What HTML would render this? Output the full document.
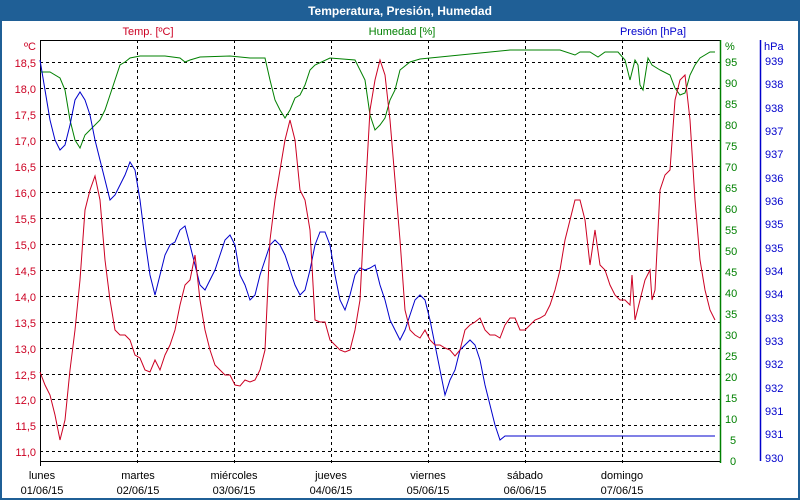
<!DOCTYPE html>
<html><head><meta charset="utf-8"><style>
html,body{margin:0;padding:0;background:#fff}
svg{display:block;font-family:"Liberation Sans",sans-serif;font-size:11px}
</style></head><body>
<svg width="800" height="500" viewBox="0 0 800 500">
<rect x="0" y="0" width="800" height="500" fill="#1f5f96"/>
<rect x="2" y="21" width="796" height="477" fill="#fff"/>
<text x="400" y="15" text-anchor="middle" fill="#fff" font-weight="bold" font-size="12">Temperatura, Presión, Humedad</text>
<text x="148" y="35" text-anchor="middle" fill="#cc0022">Temp. [ºC]</text>
<text x="402" y="35" text-anchor="middle" fill="#008000">Humedad [%]</text>
<text x="653" y="35" text-anchor="middle" fill="#0000cc">Presión [hPa]</text>
<g stroke="#000" stroke-dasharray="3,3" stroke-width="1">
<line x1="40" x2="720" y1="62.5" y2="62.5"/><line x1="40" x2="720" y1="88.5" y2="88.5"/><line x1="40" x2="720" y1="114.5" y2="114.5"/><line x1="40" x2="720" y1="140.5" y2="140.5"/><line x1="40" x2="720" y1="166.5" y2="166.5"/><line x1="40" x2="720" y1="192.5" y2="192.5"/><line x1="40" x2="720" y1="218.5" y2="218.5"/><line x1="40" x2="720" y1="244.5" y2="244.5"/><line x1="40" x2="720" y1="270.5" y2="270.5"/><line x1="40" x2="720" y1="296.5" y2="296.5"/><line x1="40" x2="720" y1="322.5" y2="322.5"/><line x1="40" x2="720" y1="348.5" y2="348.5"/><line x1="40" x2="720" y1="374.5" y2="374.5"/><line x1="40" x2="720" y1="399.5" y2="399.5"/><line x1="40" x2="720" y1="425.5" y2="425.5"/><line x1="40" x2="720" y1="451.5" y2="451.5"/>
<line x1="137.5" x2="137.5" y1="40" y2="466"/><line x1="234.5" x2="234.5" y1="40" y2="466"/><line x1="331.5" x2="331.5" y1="40" y2="466"/><line x1="428.5" x2="428.5" y1="40" y2="466"/><line x1="525.5" x2="525.5" y1="40" y2="466"/><line x1="622.5" x2="622.5" y1="40" y2="466"/>
</g>
<line x1="40.5" x2="40.5" y1="40" y2="466" stroke="#000"/>
<line x1="40" x2="720" y1="461.5" y2="461.5" stroke="#000"/>
<line x1="40" x2="720" y1="40.5" y2="40.5" stroke="#000"/>
<line x1="720.5" x2="720.5" y1="40" y2="463" stroke="#008000" stroke-width="1.5"/>
<line x1="760.5" x2="760.5" y1="40" y2="461" stroke="#0000cc" stroke-width="1.5"/>
<g fill="#cc0022" text-anchor="end">
<text x="36" y="50">ºC</text>
<text x="36" y="67">18,5</text><text x="36" y="93">18,0</text><text x="36" y="119">17,5</text><text x="36" y="145">17,0</text><text x="36" y="171">16,5</text><text x="36" y="197">16,0</text><text x="36" y="223">15,5</text><text x="36" y="249">15,0</text><text x="36" y="275">14,5</text><text x="36" y="301">14,0</text><text x="36" y="327">13,5</text><text x="36" y="353">13,0</text><text x="36" y="379">12,5</text><text x="36" y="404">12,0</text><text x="36" y="430">11,5</text><text x="36" y="456">11,0</text>
</g>
<g fill="#008000">
<text x="725" y="50">%</text>
<text x="725" y="66">95</text><text x="725" y="87">90</text><text x="725" y="108">85</text><text x="725" y="129">80</text><text x="725" y="150">75</text><text x="725" y="171">70</text><text x="725" y="192">65</text><text x="725" y="213">60</text><text x="725" y="234">55</text><text x="725" y="255">50</text><text x="725" y="276">45</text><text x="725" y="297">40</text><text x="725" y="318">35</text><text x="725" y="339">30</text><text x="725" y="360">25</text><text x="725" y="381">20</text><text x="725" y="402">15</text><text x="725" y="423">10</text><text x="730" y="444">5</text><text x="730" y="465">0</text>
</g>
<g fill="#0000cc">
<text x="764" y="50">hPa</text>
<text x="765" y="65">939</text><text x="765" y="88">938</text><text x="765" y="112">938</text><text x="765" y="135">937</text><text x="765" y="158">937</text><text x="765" y="182">936</text><text x="765" y="205">936</text><text x="765" y="228">935</text><text x="765" y="252">935</text><text x="765" y="275">934</text><text x="765" y="298">934</text><text x="765" y="322">933</text><text x="765" y="345">933</text><text x="765" y="368">932</text><text x="765" y="392">932</text><text x="765" y="415">931</text><text x="765" y="438">931</text><text x="765" y="462">930</text>
</g>
<g fill="#000" text-anchor="middle">
<text x="42" y="479">lunes</text><text x="42" y="494">01/06/15</text>
<text x="138" y="479">martes</text><text x="138" y="494">02/06/15</text>
<text x="234" y="479">miércoles</text><text x="234" y="494">03/06/15</text>
<text x="331" y="479">jueves</text><text x="331" y="494">04/06/15</text>
<text x="428" y="479">viernes</text><text x="428" y="494">05/06/15</text>
<text x="525" y="479">sábado</text><text x="525" y="494">06/06/15</text>
<text x="622" y="479">domingo</text><text x="622" y="494">07/06/15</text>
</g>
<polyline fill="none" stroke="#008000" points="40,72 50,72 60,78 65,90 70,120 75,140 80,148 85,135 90,130 100,120 105,110 110,95 115,80 120,65 125,62 130,58 140,56 165,56 180,58 185,62 190,60 200,57 230,56 250,58 265,58 270,80 275,100 280,110 285,118 290,110 295,98 300,95 305,85 310,70 315,65 330,58 355,60 365,80 370,115 375,130 380,125 385,118 390,100 395,90 400,70 410,62 420,59 440,57 470,54 510,50 560,50 575,55 580,52 590,52 598,57 605,52 618,52 625,60 630,80 635,60 638,65 640,85 643,90 648,58 652,65 660,70 670,75 675,88 680,95 685,93 690,75 695,65 700,58 710,52 715,52"/>
<polyline fill="none" stroke="#0000cc" points="40,60 45,90 50,120 55,140 60,150 65,145 70,125 75,100 80,92 85,100 90,115 95,140 100,160 105,180 110,200 115,195 120,185 125,175 130,162 135,170 140,200 145,240 150,275 155,295 160,275 165,255 170,245 175,242 180,230 185,226 190,245 195,265 200,285 205,290 210,280 215,270 220,255 225,240 230,235 235,245 240,275 245,285 250,300 255,295 260,275 265,260 270,245 275,240 280,245 285,255 290,270 295,285 300,295 305,290 310,270 315,245 320,232 325,232 330,245 335,275 340,300 345,310 350,295 355,275 360,268 365,270 370,268 375,265 380,285 385,300 390,320 395,330 400,340 405,330 410,315 415,300 420,295 425,300 430,320 435,345 440,370 445,395 450,380 455,370 460,350 465,345 470,340 475,345 480,360 485,385 490,405 495,425 500,440 505,436 715,436"/>
<polyline fill="none" stroke="#cc0022" points="40,372 45,385 50,395 55,415 60,440 65,420 70,370 75,330 80,280 85,210 90,190 95,176 100,200 105,260 110,300 115,330 120,335 125,335 130,340 135,355 140,358 145,370 150,372 155,360 160,370 165,355 170,345 175,330 180,305 185,285 190,280 195,255 200,300 205,330 210,350 215,365 220,370 225,375 230,375 235,385 240,386 245,380 250,382 255,380 260,370 265,350 270,240 275,200 280,170 285,140 290,120 295,140 300,190 305,200 310,230 315,320 320,322 325,322 330,340 335,345 340,350 345,352 350,350 355,330 360,300 365,200 370,110 375,80 380,60 385,75 390,120 395,180 400,240 405,310 410,330 415,335 420,338 425,330 430,340 435,345 440,345 445,348 450,350 455,356 460,350 465,330 470,325 475,322 480,318 485,330 490,335 495,335 500,338 505,325 510,318 515,318 520,330 525,330 530,325 535,320 540,318 545,315 550,305 555,290 560,270 565,240 570,220 575,200 580,200 585,220 590,265 595,230 600,265 605,270 610,285 615,295 620,300 625,300 630,305 632,275 635,320 640,300 645,280 650,270 652,300 655,290 660,190 665,175 670,170 675,100 680,80 685,75 690,120 695,200 700,260 705,290 710,310 715,320"/>
</svg>
</body></html>
